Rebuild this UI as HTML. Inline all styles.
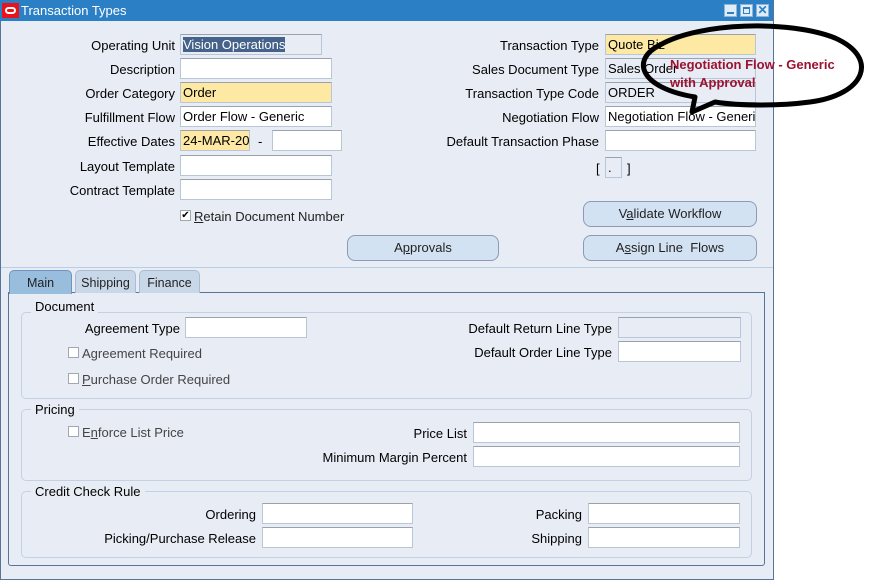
<!DOCTYPE html>
<html><head><meta charset="utf-8">
<style>
*{box-sizing:border-box;margin:0;padding:0}
body{width:871px;height:584px;background:#fff;font-family:"Liberation Sans",Arial,sans-serif;font-size:12.5px;color:#000;position:relative;overflow:hidden}
.win{position:absolute;left:0;top:0;width:774px;height:580px;background:#e8edf5;border-right:1px solid #5a7399;border-bottom:1px solid #5a7399;box-shadow:inset 1px 0 #5a7399}
.title{position:absolute;left:0;top:0;width:773px;height:21px;background:#2b80c5;color:#fff;font-size:13px;line-height:21px;padding-left:21px}
.logo{position:absolute;left:2px;top:3px;width:17px;height:15px;background:#e8141b}
.logo:after{content:"";position:absolute;left:3px;top:4px;width:11px;height:7px;border:2px solid #fff;border-radius:4px;box-sizing:border-box}
.wb{position:absolute;top:4px;width:13px;height:13px;background:#e0ecf8;border:1px solid #8fb4d8}
.l{position:absolute;text-align:right;white-space:nowrap;line-height:21px;font-size:13px}
.i{position:absolute;height:21px;background:#fff;border:1px solid #b9c6d8;border-top-color:#9aa3ad;line-height:19px;padding-left:2px;white-space:nowrap;overflow:hidden;font-size:13px}
.y{background:#fde9a3}
.g{background:#e8edf5}
.btn{position:absolute;height:26px;background:#d3e2f2;border:1px solid #8a9bb3;border-radius:8px;text-align:center;line-height:24px;color:#222;font-size:13px}
.tab{position:absolute;top:270px;height:23px;background:#c9d8e9;border:1px solid #a9bcd3;border-bottom:none;border-radius:5px 5px 0 0;text-align:center;line-height:24px;color:#222}
.grp{position:absolute;border:1px solid #c3d1e3;border-radius:5px}
.gl{position:absolute;background:#e8edf5;padding:0 4px;line-height:14px;font-size:13px}
.cb{position:absolute;width:11px;height:11px;border:1px solid #a0a8b0;background:#fff}
.ct{position:absolute;line-height:14px;color:#444;font-size:13px}
</style></head><body>
<div class="win">
<div class="title"><div class="logo"></div>Transaction Types</div>
<div class="wb" style="left:724px"><div style="position:absolute;left:2px;bottom:2px;width:7px;height:2px;background:#2b80c5"></div></div>
<div class="wb" style="left:740px"><div style="position:absolute;left:2px;top:2px;width:7px;height:7px;border:2px solid #2b80c5;border-width:2px 1px 1px 1px"></div></div>
<div class="wb" style="left:756px;color:#2b80c5;font-weight:bold;font-size:12px;line-height:11px;text-align:center">✕</div>

<div class="l" style="right:598px;top:35px">Operating Unit</div>
<div class="i g" style="left:180px;top:34px;width:142px"><span style="background:#44628a;color:#fff">Vision Operations</span></div>
<div class="l" style="right:598px;top:59px">Description</div>
<div class="i" style="left:180px;top:58px;width:152px"></div>
<div class="l" style="right:598px;top:83px">Order Category</div>
<div class="i y" style="left:180px;top:82px;width:152px">Order</div>
<div class="l" style="right:598px;top:107px">Fulfillment Flow</div>
<div class="i" style="left:180px;top:106px;width:152px">Order Flow - Generic</div>
<div class="l" style="right:598px;top:131px">Effective Dates</div>
<div class="i y" style="left:180px;top:130px;width:70px">24-MAR-201</div>
<div class="l" style="left:258px;top:131px">-</div>
<div class="i" style="left:272px;top:130px;width:70px"></div>
<div class="l" style="right:598px;top:156px">Layout Template</div>
<div class="i" style="left:180px;top:155px;width:152px"></div>
<div class="l" style="right:598px;top:180px">Contract Template</div>
<div class="i" style="left:180px;top:179px;width:152px"></div>
<div class="cb" style="left:180px;top:210px;font-size:10px;line-height:9px;text-align:center">✔</div>
<div class="ct" style="left:194px;top:210px;color:#222"><u>R</u>etain Document Number</div>

<div class="l" style="right:174px;top:35px">Transaction Type</div>
<div class="i y" style="left:605px;top:34px;width:151px">Quote Biz</div>
<div class="l" style="right:174px;top:59px">Sales Document Type</div>
<div class="i g" style="left:605px;top:58px;width:151px">Sales Order</div>
<div class="l" style="right:174px;top:83px">Transaction Type Code</div>
<div class="i g" style="left:605px;top:82px;width:151px">ORDER</div>
<div class="l" style="right:174px;top:107px">Negotiation Flow</div>
<div class="i" style="left:605px;top:106px;width:151px">Negotiation Flow - Generic</div>
<div class="l" style="right:174px;top:131px">Default Transaction Phase</div>
<div class="i" style="left:605px;top:130px;width:151px"></div>
<div class="l" style="left:596px;top:158px">[</div>
<div class="i g" style="left:605px;top:157px;width:17px;height:21px">.</div>
<div class="l" style="left:627px;top:158px">]</div>

<div class="btn" style="left:583px;top:201px;width:174px">V<u>a</u>lidate Workflow</div>
<div class="btn" style="left:347px;top:235px;width:152px">A<u>p</u>provals</div>
<div class="btn" style="left:583px;top:235px;width:174px">A<u>s</u>sign Line&nbsp; Flows</div>
<div style="position:absolute;left:1px;top:267px;width:772px;height:1px;background:#b9cde3"></div>

<div style="position:absolute;left:8px;top:292px;width:757px;height:274px;border:1px solid #5a7399;border-radius:0 0 3px 3px;background:#e8edf5"></div>
<div class="tab" style="left:9px;width:63px;background:#98bddd;border-color:#6f93bb;height:24px">Main</div>
<div class="tab" style="left:75px;width:61px">Shipping</div>
<div class="tab" style="left:139px;width:61px">Finance</div>

<div class="grp" style="left:21px;top:312px;width:731px;height:87px"></div>
<div class="gl" style="left:31px;top:300px">Document</div>
<div class="l" style="right:593px;top:318px">Agreement Type</div>
<div class="i" style="left:185px;top:317px;width:122px"></div>
<div class="cb" style="left:68px;top:347px"></div><div class="ct" style="left:82px;top:347px">Agreement Required</div>
<div class="cb" style="left:68px;top:373px"></div><div class="ct" style="left:82px;top:373px"><u>P</u>urchase Order Required</div>
<div class="l" style="right:161px;top:318px">Default Return Line Type</div>
<div class="i g" style="left:618px;top:317px;width:123px"></div>
<div class="l" style="right:161px;top:342px">Default Order Line Type</div>
<div class="i" style="left:618px;top:341px;width:123px"></div>

<div class="grp" style="left:21px;top:409px;width:731px;height:72px"></div>
<div class="gl" style="left:31px;top:403px">Pricing</div>
<div class="cb" style="left:68px;top:426px"></div><div class="ct" style="left:82px;top:426px">E<u>n</u>force List Price</div>
<div class="l" style="right:306px;top:423px">Price List</div>
<div class="i" style="left:473px;top:422px;width:267px"></div>
<div class="l" style="right:306px;top:447px">Minimum Margin Percent</div>
<div class="i" style="left:473px;top:446px;width:267px"></div>

<div class="grp" style="left:21px;top:491px;width:731px;height:67px"></div>
<div class="gl" style="left:31px;top:485px">Credit Check Rule</div>
<div class="l" style="right:517px;top:504px">Ordering</div>
<div class="i" style="left:262px;top:503px;width:151px"></div>
<div class="l" style="right:517px;top:528px">Picking/Purchase Release</div>
<div class="i" style="left:262px;top:527px;width:151px"></div>
<div class="l" style="right:191px;top:504px">Packing</div>
<div class="i" style="left:588px;top:503px;width:152px"></div>
<div class="l" style="right:191px;top:528px">Shipping</div>
<div class="i" style="left:588px;top:527px;width:152px"></div>
</div>

<svg style="position:absolute;left:0;top:0" width="871" height="584">
<path d="M 695 97 C 640 88 630 60 660 45 C 700 22 790 20 835 38 C 880 58 865 95 810 102 C 780 106 740 106 715 102 L 692 112 Z" fill="#fff" fill-opacity="0" stroke="#000" stroke-width="5" stroke-linejoin="round"/>
<text x="670" y="69" font-family="'Liberation Sans',sans-serif" font-size="13" font-weight="bold" fill="#9b1232">Negotiation Flow - Generic</text>
<text x="670" y="87" font-family="'Liberation Sans',sans-serif" font-size="13" font-weight="bold" fill="#9b1232">with Approval</text>
</svg>
</body></html>
